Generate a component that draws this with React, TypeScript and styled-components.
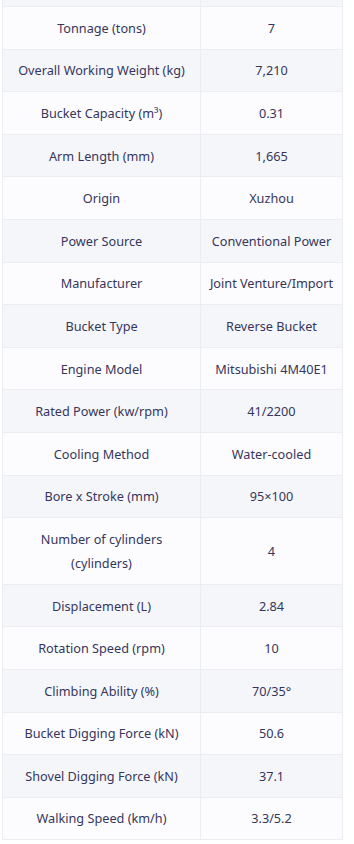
import React from "react";
import styled, { createGlobalStyle } from "styled-components";

const GlobalStyle = createGlobalStyle`
  html, body {
    margin: 0;
    padding: 0;
    background: #ffffff;
  }
`;

const Page = styled.div`
  padding: 0 12px 0 2px;
  font-family: "Noto Sans", "Open Sans", sans-serif;
`;

const Table = styled.table`
  width: 340px;
  border-collapse: collapse;
  table-layout: fixed;
  margin-top: -1px;
`;

const Row = styled.tr<{ $shade: boolean }>`
  background: ${(p) => (p.$shade ? "#f5f6fa" : "#fcfcfe")};
`;

const Cell = styled.td`
  border: 1px solid #ebedf1;
  padding: 8.8px 6px;
  text-align: center;
  vertical-align: middle;
  font-size: 12.7px;
  line-height: 24px;
  color: #36365c;
`;

const StubCell = styled.td`
  border: 1px solid #ebedf1;
  height: 6px;
  padding: 0;
`;

const specs: [string, string][] = [
  ["Tonnage (tons)", "7"],
  ["Overall Working Weight (kg)", "7,210"],
  ["Bucket Capacity (m³)", "0.31"],
  ["Arm Length (mm)", "1,665"],
  ["Origin", "Xuzhou"],
  ["Power Source", "Conventional Power"],
  ["Manufacturer", "Joint Venture/Import"],
  ["Bucket Type", "Reverse Bucket"],
  ["Engine Model", "Mitsubishi 4M40E1"],
  ["Rated Power (kw/rpm)", "41/2200"],
  ["Cooling Method", "Water-cooled"],
  ["Bore x Stroke (mm)", "95×100"],
  ["Number of cylinders (cylinders)", "4"],
  ["Displacement (L)", "2.84"],
  ["Rotation Speed (rpm)", "10"],
  ["Climbing Ability (%)", "70/35°"],
  ["Bucket Digging Force (kN)", "50.6"],
  ["Shovel Digging Force (kN)", "37.1"],
  ["Walking Speed (km/h)", "3.3/5.2"],
];

const App = () => {
  return (
    <Page>
      <GlobalStyle />
      <Table>
        <colgroup>
          <col style={{ width: 198 }} />
          <col style={{ width: 142 }} />
        </colgroup>
        <tbody>
          <Row $shade>
            <StubCell />
            <StubCell />
          </Row>
          {specs.map(([label, value], i) => (
            <Row key={label} $shade={i % 2 === 1}>
              <Cell>{label}</Cell>
              <Cell>{value}</Cell>
            </Row>
          ))}
        </tbody>
      </Table>
    </Page>
  );
};

export default App;
